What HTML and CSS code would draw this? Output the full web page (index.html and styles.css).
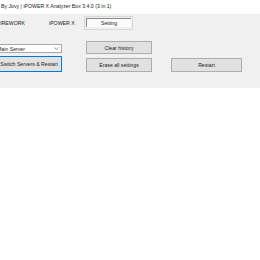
FILE: index.html
```html
<!DOCTYPE html>
<html lang="en">
<head>
    <meta charset="UTF-8">
    <title>iPOWER X Analyzer Box</title>
    <link rel="stylesheet" href="styles.css">
</head>
<body>

    <div class="title-bar">By Jovy | iPOWER X Analyzer Box 3.4.0 (3 in 1)</div>

    <div class="panel">
        <div class="tabs">
            <div class="tab tab-firework">FIREWORK</div>
            <div class="tab tab-power">iPOWER X</div>
            <div class="tab tab-active"><span>Setting</span></div>
        </div>

        <div class="settings">
            <div class="select-box">
                <span>Main Server</span>
                <svg class="chevron" width="5" height="3" viewBox="0 0 5 3"><path d="M0.5 0.5 L2.5 2.5 L4.5 0.5" fill="none" stroke="#666" stroke-width="0.7"/></svg>
            </div>
            <button class="button col2">Clear history</button>

            <button class="button focused">Switch Servers &amp; Restart</button>
            <button class="button col2">Erase all settings</button>
            <button class="button col3">Restart</button>
        </div>
    </div>

</body>
</html>
```

FILE: styles.css
```css
body {
    font-family: "Liberation Sans", Arial, sans-serif;
    font-size: 5.2px;
    color: #222;
    background-color: #fff;
    margin: 0;
    padding: 0;
}
.title-bar {
    height: 14px;
    line-height: 12px;
    padding-left: 1px;
    white-space: nowrap;
}
.panel {
    background-color: #f0f0f0;
    height: 74px;
    overflow: hidden;
}
.tabs {
    display: flex;
    align-items: center;
    height: 15px;
    padding-top: 1px;
}
.tab {
    white-space: nowrap;
    line-height: 12px;
}
.tab-firework {
    margin-left: -3px;
    width: 52px;
}
.tab-power {
    width: 37px;
}
.tab-active {
    width: 45px;
    height: 10px;
    border: 1px solid #d8d8d8;
    padding: 1px;
    margin-left: -2px;
}
.tab-active span {
    display: block;
    height: 8px;
    line-height: 8px;
    text-align: center;
    background-color: #fbfbfb;
    border-top: 1px solid #8a8a8a;
    border-left: 1px solid #8a8a8a;
}
.settings {
    display: grid;
    grid-template-columns: 62px 66px 66px;
    grid-template-rows: 13px 14px;
    column-gap: 24px;
    row-gap: 4px;
    padding-top: 11px;
}
.settings .col2 {
    grid-column: 2;
}
.settings .col3 {
    grid-column: 3;
    margin-left: -5px;
}
.select-box {
    grid-column: 1;
    margin-top: 3px;
    height: 9px;
    background-color: #fff;
    border: 1px solid #a8a8a8;
    border-left: none;
    display: flex;
    align-items: center;
    justify-content: space-between;
    padding-right: 2px;
    box-sizing: border-box;
    margin-left: -3px;
    overflow: hidden;
}
.select-box span {
    line-height: 8px;
}
.chevron {
    display: block;
}
.button {
    font-family: "Liberation Sans", Arial, sans-serif;
    font-size: 5.2px;
    color: #222;
    background-color: #e1e1e1;
    border: 1px solid #adadad;
    padding: 0;
    margin: 0;
    white-space: nowrap;
}
.focused {
    grid-column: 1;
    grid-row: 2;
    border: 1px solid #0078d7;
    margin-top: -2px;
    margin-left: -4px;
    width: 66px;
}
```
